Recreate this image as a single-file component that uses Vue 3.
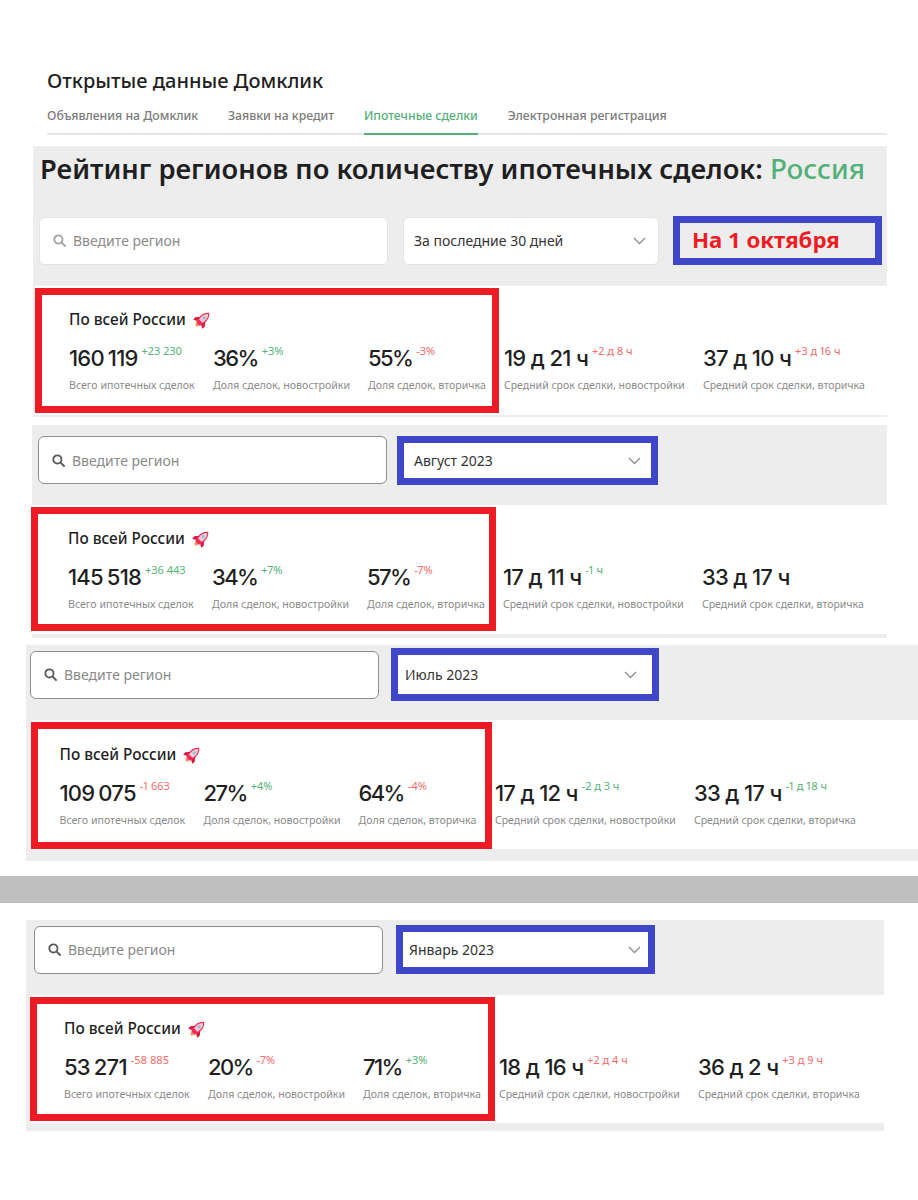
<template>
  <div class="page">
    <header class="top">
      <div class="brand">Открытые данные Домклик</div>
      <nav class="tabs">
        <span v-for="t in tabs" :key="t" class="tab" :class="{ active: t === 'Ипотечные сделки' }">{{ t }}</span>
      </nav>
    </header>

    <template v-for="(s, i) in sections" :key="s.period">
      <div v-if="i === 3" class="divider"></div>
      <section class="block" :class="s.cls">
        <h1 v-if="s.heading" class="heading">Рейтинг регионов по количеству ипотечных сделок: <span>Россия</span></h1>
        <div class="filters">
          <div class="search">
            <svg class="search-icon" width="13" height="13" viewBox="0 0 13 13" fill="none">
              <circle cx="5.4" cy="5.4" r="4.1" stroke="currentColor" stroke-width="1.8" />
              <path d="M8.4 8.4 12 12" stroke="currentColor" stroke-width="1.9" stroke-linecap="round" />
            </svg>
            <span>Введите регион</span>
          </div>
          <div class="select">
            <span>{{ s.period }}</span>
            <svg width="13" height="8" viewBox="0 0 13 8" fill="none">
              <path d="M1 1l5.5 5.5L12 1" stroke="#8c8c8c" stroke-width="1.3" />
            </svg>
          </div>
          <div v-if="s.heading" class="note"><span>На 1 октября</span></div>
        </div>
        <div class="row">
          <div class="marked">
            <div class="region">
              По всей России
              <svg class="rocket" width="19" height="19" viewBox="0 0 24 24">
                <g transform="rotate(45 12 12)">
                  <path d="M9.500 19h5l-1 4.500h-3z" fill="#f58b4b" />
                  <path d="M8 11l-4.500 5.500.4 4L8.500 18zM16 11l4.500 5.500-.4 4-4.600-2.500z" fill="#d9183f" />
                  <path d="M12 0c3.600 2.800 5 6.500 5 10.500 0 3.500-.8 6.500-2 9.500H9c-1.200-3-2-6-2-9.500C7 6.500 8.400 2.800 12 0z" fill="#ec2f57" />
                  <path d="M12 2c-2.500 2.300-3.500 5-3.500 8.500 0 1.500.2 3 .5 4.500h6c.3-1.500.5-3 .5-4.500C15.500 7 14.500 4.300 12 2z" fill="#f8ccd6" />
                  <circle cx="12" cy="9" r="2.100" fill="#8fc0d8" />
                </g>
              </svg>
            </div>
            <div class="stats">
              <div v-for="m in s.main" :key="m.label" class="stat">
                <div class="value" :class="{ pct: m.value.endsWith('%') }">{{ m.value }}<sup v-if="m.delta" :class="m.tone">{{ m.delta }}</sup></div>
                <div class="label">{{ m.label }}</div>
              </div>
            </div>
          </div>
          <div v-for="m in s.terms" :key="m.label" class="stat term">
            <div class="value">{{ m.value }}<sup v-if="m.delta" :class="m.tone">{{ m.delta }}</sup></div>
            <div class="label">{{ m.label }}</div>
          </div>
        </div>
      </section>
    </template>
  </div>
</template>

<script setup>
const tabs = ['Объявления на Домклик', 'Заявки на кредит', 'Ипотечные сделки', 'Электронная регистрация']

const L1 = 'Всего ипотечных сделок'
const L2 = 'Доля сделок, новостройки'
const L3 = 'Доля сделок, вторичка'
const L4 = 'Средний срок сделки, новостройки'
const L5 = 'Средний срок сделки, вторичка'

const stat = (value, delta, tone, label) => ({ value, delta, tone, label })

const sections = [
  {
    cls: 's1',
    heading: true,
    period: 'За последние 30 дней',
    main: [
      stat('160 119', '+23 230', 'up', L1),
      stat('36%', '+3%', 'up', L2),
      stat('55%', '-3%', 'down', L3)
    ],
    terms: [
      stat('19 д 21 ч', '+2 д 8 ч', 'down', L4),
      stat('37 д 10 ч', '+3 д 16 ч', 'down', L5)
    ]
  },
  {
    cls: 's2',
    period: 'Август 2023',
    main: [
      stat('145 518', '+36 443', 'up', L1),
      stat('34%', '+7%', 'up', L2),
      stat('57%', '-7%', 'down', L3)
    ],
    terms: [
      stat('17 д 11 ч', '-1 ч', 'up', L4),
      stat('33 д 17 ч', '', '', L5)
    ]
  },
  {
    cls: 's3',
    period: 'Июль 2023',
    main: [
      stat('109 075', '-1 663', 'down', L1),
      stat('27%', '+4%', 'up', L2),
      stat('64%', '-4%', 'down', L3)
    ],
    terms: [
      stat('17 д 12 ч', '-2 д 3 ч', 'up', L4),
      stat('33 д 17 ч', '-1 д 18 ч', 'up', L5)
    ]
  },
  {
    cls: 's4',
    period: 'Январь 2023',
    main: [
      stat('53 271', '-58 885', 'down', L1),
      stat('20%', '-7%', 'down', L2),
      stat('71%', '+3%', 'up', L3)
    ],
    terms: [
      stat('18 д 16 ч', '+2 д 4 ч', 'down', L4),
      stat('36 д 2 ч', '+3 д 9 ч', 'down', L5)
    ]
  }
]
</script>

<style>
html,
body {
  background: #fff;
}
</style>

<style scoped>
.page {
  height: 1200px;
  overflow: hidden;
  font-family: "Noto Sans", "Open Sans", sans-serif;
  color: #1f1f1f;
}

.top {
  margin-left: 47px;
  width: 840px;
  padding-top: 68px;
}

.brand {
  font-size: 20px;
  line-height: 26px;
  font-weight: 500;
}

.tabs {
  display: flex;
  gap: 29.8px;
  border-bottom: 2px solid #e6e6e6;
}

.tab {
  margin-bottom: -2px;
  padding: 13px 0 8px;
  border-bottom: 2px solid transparent;
  font-size: 12.25px;
  line-height: 18px;
  font-weight: 500;
  color: #7b7b7b;
}

.tab.active {
  color: #53b078;
  border-bottom-color: #53b078;
}

.block {
  margin-left: var(--left);
  width: var(--width);
  margin-top: var(--top);
  padding-bottom: var(--strip);
  background: #ededed;
}

.s1 {
  --left: 33px;
  --width: 854px;
  --top: 11px;
  --strip: 2px;
  --pad-top: 0px;
  --pad-bottom: 21px;
  --search-left: 6px;
  --select-gap: 15px;
  --select-width: 256px;
  --select-pad: 11px 12px 11px 10px;
  --row-left: 2px;
  --row-height: 129px;
  --box-width: 464px;
  --box-height: 125px;
  --box-top: 13px;
  --box-pad: 27px;
  --term-gap: 5px;
  --term-top: 54px;
}

.s2 {
  --left: 32px;
  --width: 855px;
  --top: 8px;
  --strip: 4px;
  --pad-top: 11px;
  --pad-bottom: 20px;
  --search-left: 6px;
  --select-gap: 10px;
  --select-width: 261px;
  --select-pad: 10px;
  --row-left: -1px;
  --row-height: 129px;
  --box-width: 465px;
  --box-height: 124px;
  --box-top: 13px;
  --box-pad: 30px;
  --term-gap: 7px;
  --term-top: 54px;
}

.s3 {
  --left: 26px;
  --width: 892px;
  --top: 7px;
  --strip: 12px;
  --pad-top: 3px;
  --pad-bottom: 19px;
  --search-left: 4px;
  --select-gap: 12px;
  --select-width: 268px;
  --select-pad: 7px 15px 7px 7px;
  --row-left: 5px;
  --row-height: 129px;
  --box-width: 461px;
  --box-height: 127px;
  --box-top: 14px;
  --box-pad: 21.5px;
  --term-gap: 3px;
  --term-top: 55px;
}

.s4 {
  --left: 26px;
  --width: 858px;
  --top: 17px;
  --strip: 8px;
  --pad-top: 5px;
  --pad-bottom: 21px;
  --search-left: 8px;
  --select-gap: 13px;
  --select-width: 259px;
  --select-pad: 6px 7px 6px 6px;
  --row-left: 4px;
  --row-height: 128px;
  --box-width: 465px;
  --box-height: 124px;
  --box-top: 13px;
  --box-pad: 27px;
  --term-gap: 4px;
  --term-top: 54px;
}

.heading {
  margin: 0;
  padding: 3px 0 0 7px;
  height: 70px;
  box-sizing: border-box;
  font-size: 27.3px;
  line-height: 38px;
  font-weight: 600;
  white-space: nowrap;
}

.heading span {
  color: #53b078;
  font-size: 27.8px;
  font-weight: 500;
}

.filters {
  display: flex;
  align-items: center;
  padding: var(--pad-top) 0 var(--pad-bottom) var(--search-left);
}

.s2 .filters {
  align-items: flex-start;
}

.search {
  display: flex;
  align-items: center;
  gap: 7px;
  box-sizing: border-box;
  width: 349px;
  height: 48px;
  padding-left: 13px;
  background: #fff;
  border: 1px solid #8e8e8e;
  border-radius: 6px;
  font-size: 14px;
  color: #8a8a8a;
}

.search-icon {
  color: #5a5a5a;
}

.s1 .search {
  border-color: #e4e4e4;
}

.s1 .search-icon {
  color: #a3a3a3;
}

.select {
  display: flex;
  align-items: center;
  justify-content: space-between;
  box-sizing: border-box;
  width: var(--select-width);
  height: 49px;
  margin-left: var(--select-gap);
  padding: var(--select-pad);
  background: #fff;
  border: 7px solid #3f46c8;
  font-size: 14px;
  color: #333;
}

.s3 .select {
  height: 53px;
}

.s1 .select {
  height: 48px;
  border: 1px solid #e4e4e4;
  border-radius: 6px;
}

.note {
  display: flex;
  align-items: center;
  box-sizing: border-box;
  width: 209px;
  height: 49px;
  margin-left: 14px;
  padding: 0 0 2px 12px;
  border: 7px solid #3f46c8;
  font-size: 22.2px;
  font-weight: 700;
  color: #ed1c24;
}

.row {
  display: flex;
  align-items: flex-start;
  box-sizing: border-box;
  height: var(--row-height);
  margin-left: var(--row-left);
  padding-top: 2px;
  background: #fff;
}

.marked {
  box-sizing: border-box;
  flex: none;
  width: var(--box-width);
  height: var(--box-height);
  padding: var(--box-top) 0 0 var(--box-pad);
  border: 7px solid #ed1c24;
}

.region {
  display: flex;
  align-items: center;
  gap: 7px;
  height: 22px;
  font-size: 15.4px;
  font-weight: 500;
}

.stats {
  display: flex;
  margin-top: 12px;
}

.stat:nth-child(1) {
  width: 144px;
}

.stat:nth-child(2) {
  width: 155px;
}

.stat {
  flex: none;
  white-space: nowrap;
}

.row .term {
  width: 199px;
  margin-top: var(--term-top);
}

.marked + .term {
  margin-left: var(--term-gap);
}

.value {
  display: flex;
  align-items: flex-start;
  height: 30px;
  font-family: Inter, "Noto Sans", sans-serif;
  font-size: 22px;
  line-height: 32px;
  font-weight: 500;
  letter-spacing: -0.8px;
  word-spacing: -1px;
}

.value.pct {
  letter-spacing: -1.6px;
}

.term .value {
  word-spacing: 0.3px;
}

sup {
  margin: 2px 0 0 4px;
  font-family: "Noto Sans", sans-serif;
  font-size: 11px;
  line-height: 14px;
  font-weight: 400;
  letter-spacing: 0;
  word-spacing: 0;
  font-feature-settings: "pnum";
}

sup.up {
  color: #53b078;
}

sup.down {
  color: #f26a6a;
}

.label {
  margin-top: 5px;
  font-size: 10.6px;
  line-height: 16px;
  color: #8a8a8a;
}

.term .label {
  font-size: 10.5px;
}

.divider {
  height: 27px;
  margin-top: 15px;
  background: #c0c0c0;
}
</style>
